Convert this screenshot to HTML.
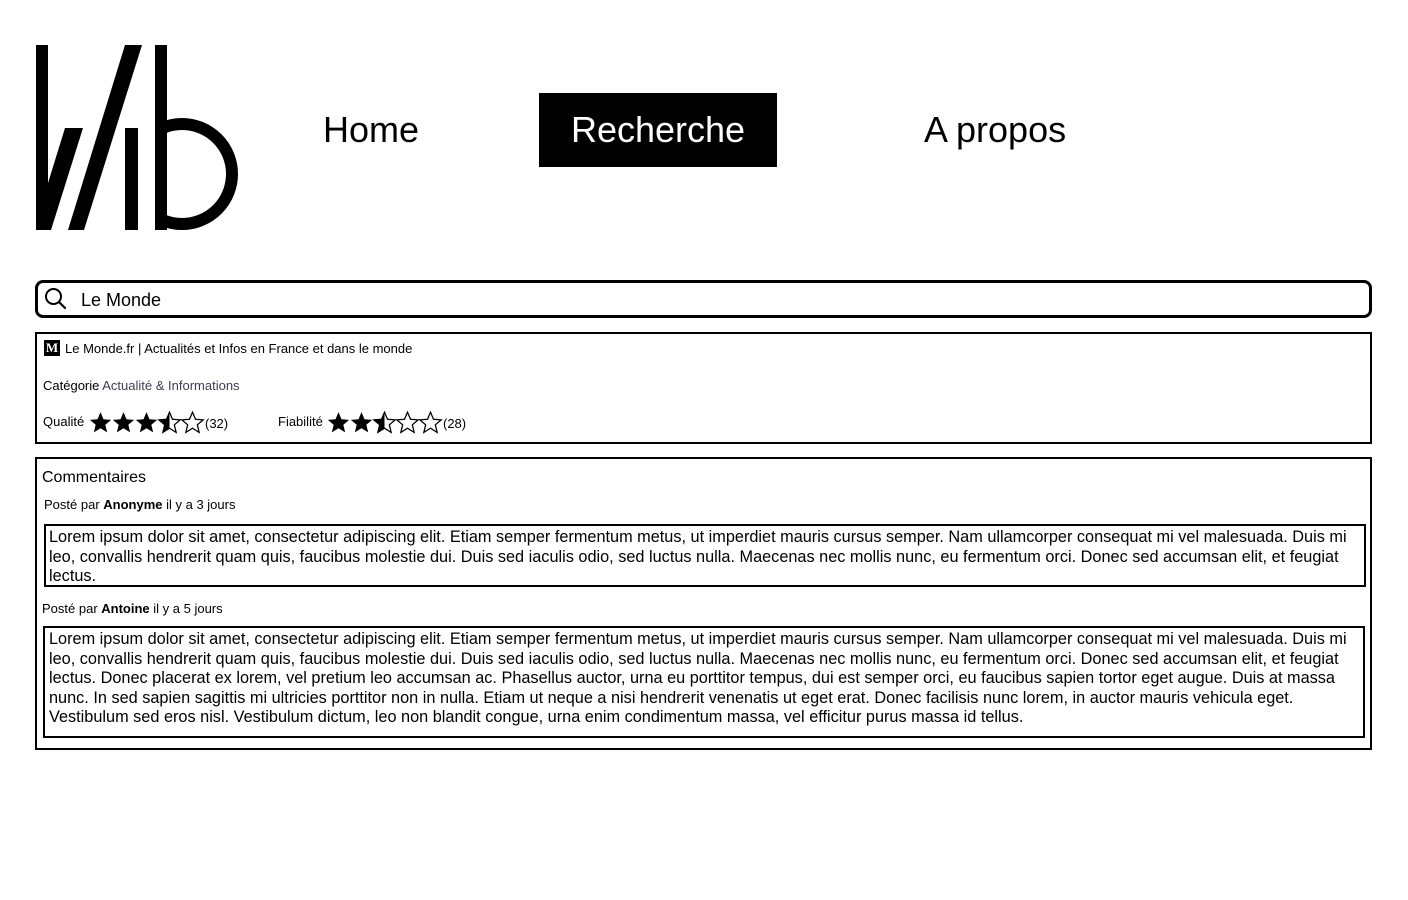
<!DOCTYPE html>
<html><head><meta charset="utf-8">
<style>
*{margin:0;padding:0;box-sizing:border-box}
body{width:1408px;height:900px;background:#fff;font-family:"Liberation Sans",Arial,sans-serif;color:#000;position:relative;overflow:hidden}
.abs{position:absolute}
.nav{font-size:36px;line-height:74px;top:93px;height:74px}
.star{display:inline-block;vertical-align:middle}
.txt{font-size:16.3px;line-height:19.5px}
</style></head><body>

<svg class="abs" style="left:0;top:0" width="260" height="240" viewBox="0 0 260 240">
  <rect x="36" y="45" width="12" height="185" fill="#000"/>
  <polygon points="125,45 142,45 84,230 68,230" fill="#000"/>
  <polygon points="65,128 83,128 51,230 48,230 48,183" fill="#000"/>
  <rect x="125" y="128" width="13" height="102" fill="#000"/>
  <rect x="155" y="45" width="12" height="185" fill="#000"/>
  <defs><clipPath id="c"><rect x="161" y="100" width="100" height="140"/></clipPath></defs>
  <circle cx="182" cy="174" r="50" fill="none" stroke="#000" stroke-width="12" clip-path="url(#c)"/>
</svg>

<div class="abs nav" style="left:323px">Home</div>
<div class="abs nav" style="left:539px;width:238px;background:#000;color:#fff;text-align:center">Recherche</div>
<div class="abs nav" style="left:924px">A propos</div>

<div class="abs" style="left:35px;top:280px;width:1337px;height:38px;border:3px solid #000;border-radius:8px"></div>
<svg class="abs" style="left:44px;top:287px" width="24" height="24" viewBox="0 0 24 24"><circle cx="9.5" cy="9.5" r="7.5" fill="none" stroke="#000" stroke-width="2"/><line x1="15" y1="15" x2="21" y2="21" stroke="#000" stroke-width="2.2" stroke-linecap="round"/></svg>
<div class="abs" style="left:81px;top:289px;font-size:18px;line-height:22px">Le Monde</div>

<div class="abs" style="left:35px;top:332px;width:1337px;height:112px;border:2px solid #000"></div>
<div class="abs" style="left:44px;top:340px;width:16px;height:16px;background:#000;color:#fff;font:bold 13px/16px 'Liberation Serif',serif;text-align:center">M</div>
<div class="abs" style="left:65px;top:341px;font-size:13px;line-height:16px">Le Monde.fr | Actualités et Infos en France et dans le monde</div>
<div class="abs" style="left:43px;top:378px;font-size:13px;line-height:16px">Catégorie <span style="color:#3d3d55">Actualité &amp; Informations</span></div>
<svg width="0" height="0" style="position:absolute"><defs>
<path id="s" d="M10 1 L12.6 7.2 L19.3 7.7 L14.2 12 L15.8 18.6 L10 15 L4.2 18.6 L5.8 12 L0.7 7.7 L7.4 7.2 Z"/>
<clipPath id="h"><rect x="0" y="0" width="10" height="20"/></clipPath>
</defs></svg>
<div class="abs" style="left:43px;top:410px;font-size:13px;line-height:24px;white-space:nowrap">Qualité
<svg class="star" width="140" height="24" viewBox="0 0 140 24" style="margin-left:1px">
<g transform="translate(0,0) scale(1.15)"><use href="#s"/></g>
<g transform="translate(23,0) scale(1.15)"><use href="#s"/></g>
<g transform="translate(46,0) scale(1.15)"><use href="#s"/></g>
<g transform="translate(69,0) scale(1.15)"><use href="#s" fill="none" stroke="#000" stroke-width="1.1"/><use href="#s" clip-path="url(#h)"/></g>
<g transform="translate(92,0) scale(1.15)"><use href="#s" fill="none" stroke="#000" stroke-width="1.1"/></g>
<text x="116" y="17" font-size="13" font-family="Liberation Sans">(32)</text>
</svg></div>
<div class="abs" style="left:278px;top:410px;font-size:13px;line-height:24px;white-space:nowrap">Fiabilité
<svg class="star" width="150" height="24" viewBox="0 0 150 24" style="margin-left:1px">
<g transform="translate(0,0) scale(1.15)"><use href="#s"/></g>
<g transform="translate(23,0) scale(1.15)"><use href="#s"/></g>
<g transform="translate(46,0) scale(1.15)"><use href="#s" fill="none" stroke="#000" stroke-width="1.1"/><use href="#s" clip-path="url(#h)"/></g>
<g transform="translate(69,0) scale(1.15)"><use href="#s" fill="none" stroke="#000" stroke-width="1.1"/></g>
<g transform="translate(92,0) scale(1.15)"><use href="#s" fill="none" stroke="#000" stroke-width="1.1"/></g>
<text x="116" y="17" font-size="13" font-family="Liberation Sans">(28)</text>
</svg></div>

<div class="abs" style="left:35px;top:457px;width:1337px;height:293px;border:2px solid #000"></div>
<div class="abs" style="left:42px;top:468px;font-size:16px;line-height:19px">Commentaires</div>
<div class="abs" style="left:44px;top:497px;font-size:13px;line-height:16px">Posté par <b>Anonyme</b> il y a 3 jours</div>
<div class="abs txt" style="left:44px;top:524px;width:1322px;height:63px;border:2px solid #000;padding:2px 3px">Lorem ipsum dolor sit amet, consectetur adipiscing elit. Etiam semper fermentum metus, ut imperdiet mauris cursus semper. Nam ullamcorper consequat mi vel malesuada. Duis mi leo, convallis hendrerit quam quis, faucibus molestie dui. Duis sed iaculis odio, sed luctus nulla. Maecenas nec mollis nunc, eu fermentum orci. Donec sed accumsan elit, et feugiat lectus.</div>
<div class="abs" style="left:42px;top:601px;font-size:13px;line-height:16px">Posté par <b>Antoine</b> il y a 5 jours</div>
<div class="abs txt" style="left:43px;top:626px;width:1322px;height:112px;border:2px solid #000;padding:2px 4px">Lorem ipsum dolor sit amet, consectetur adipiscing elit. Etiam semper fermentum metus, ut imperdiet mauris cursus semper. Nam ullamcorper consequat mi vel malesuada. Duis mi leo, convallis hendrerit quam quis, faucibus molestie dui. Duis sed iaculis odio, sed luctus nulla. Maecenas nec mollis nunc, eu fermentum orci. Donec sed accumsan elit, et feugiat lectus. Donec placerat ex lorem, vel pretium leo accumsan ac. Phasellus auctor, urna eu porttitor tempus, dui est semper orci, eu faucibus sapien tortor eget augue. Duis at massa nunc. In sed sapien sagittis mi ultricies porttitor non in nulla. Etiam ut neque a nisi hendrerit venenatis ut eget erat. Donec facilisis nunc lorem, in auctor mauris vehicula eget. Vestibulum sed eros nisl. Vestibulum dictum, leo non blandit congue, urna enim condimentum massa, vel efficitur purus massa id tellus.</div>

</body></html>
